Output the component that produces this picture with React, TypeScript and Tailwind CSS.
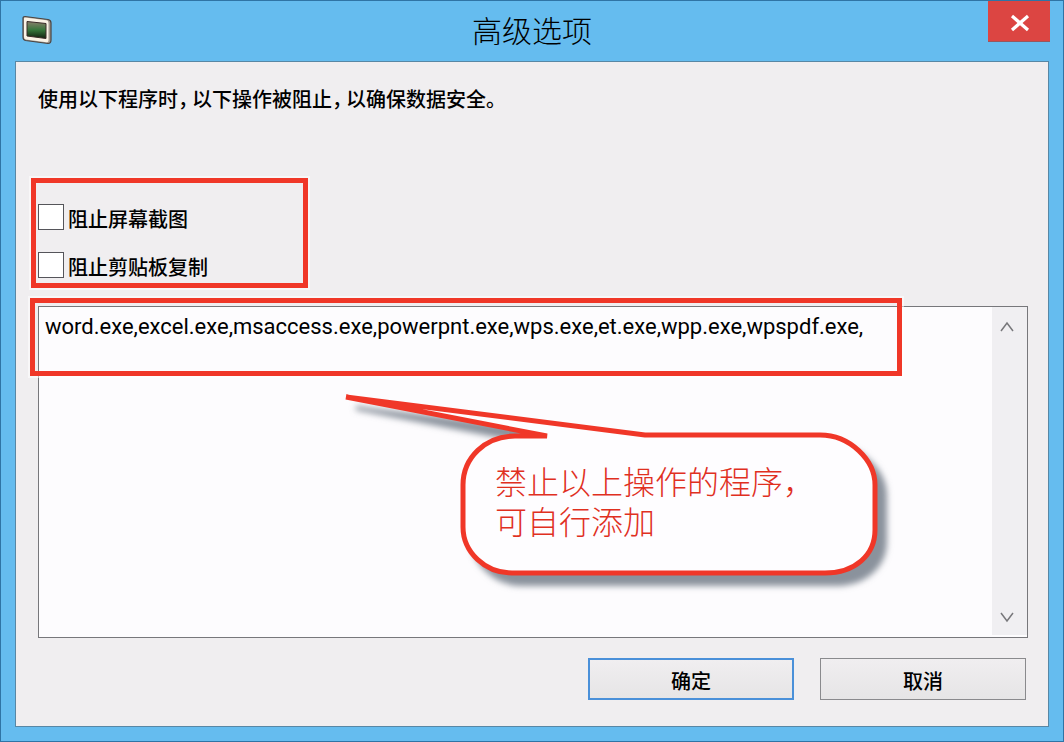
import { useState } from 'react';

const DEFAULT_PROGRAMS =
  'word.exe,excel.exe,msaccess.exe,powerpnt.exe,wps.exe,et.exe,wpp.exe,wpspdf.exe,';

const OPTIONS = [
  { id: 'block-screenshot', label: '阻止屏幕截图' },
  { id: 'block-clipboard', label: '阻止剪贴板复制' },
];

function MonitorIcon() {
  return (
    <svg className="h-8 w-8" viewBox="0 0 32 32" aria-hidden="true">
      <defs>
        <linearGradient id="screen" x1="0" y1="0" x2="0" y2="1">
          <stop offset="0" stopColor="#8a7f6c" />
          <stop offset="0.5" stopColor="#35763a" />
          <stop offset="1" stopColor="#10200f" />
        </linearGradient>
      </defs>
      <path d="M4 1.500 L27 4.500 Q30 5 30 8 V25 Q30 28.500 27 28.500 L4.500 25.500 Q2 25 2 22 V3.500 Q2 1.500 4 1.500Z" fill="#a39a90" stroke="#4b4440" strokeWidth="1.200" />
      <path d="M4 2.500 L25.500 5.200 Q27.500 5.500 27.500 8 V25.500 Q27.500 27.500 25.500 27.200 L5 24.500 Q3 24 3 22 V3.500 Q3 2.500 4 2.500Z" fill="#faf3e6" />
      <path d="M6 6.500 L25 8.500 V23.500 L6 21Z" fill="url(#screen)" stroke="#3a2c28" strokeWidth="1" />
    </svg>
  );
}

function TitleBar() {
  return (
    <header className="relative flex h-[60px] shrink-0 items-center justify-center pb-1">
      <div className="absolute left-5 top-3.5">
        <MonitorIcon />
      </div>
      <h1 className="text-[30px] font-light leading-10">高级选项</h1>
      <button
        type="button"
        aria-label="关闭"
        className="absolute right-[13px] top-0 flex h-[41px] w-[62px] items-center justify-center border-b border-[#98575f] bg-[#dc4542] pl-0.5 pt-1"
      >
        <svg className="h-5 w-5" viewBox="0 0 20 20" aria-hidden="true">
          <path d="M2 3 L18 17 M18 3 L2 17" stroke="#fff" strokeWidth="3.200" />
        </svg>
      </button>
    </header>
  );
}

// Full-width comma set on a narrower advance
function Comma() {
  return <span className="inline-block w-3.5 [font-feature-settings:'halt']">，</span>;
}

function ScrollButton({ label, d }: { label: string; d: string }) {
  return (
    <button type="button" aria-label={label} className="flex h-9 w-[30px] items-center justify-center">
      <svg className="h-3 w-4" viewBox="0 0 16 12" fill="none" aria-hidden="true">
        <path d={d} stroke="#77777b" strokeWidth="1.500" />
      </svg>
    </button>
  );
}

function Callout() {
  return (
    <div className="absolute left-[301px] top-[83px] h-[210px] w-[560px]">
      <svg className="absolute inset-0 h-full w-full overflow-visible" viewBox="0 0 560 210" aria-hidden="true">
        <defs>
          <filter id="soft" x="-10%" y="-20%" width="120%" height="140%">
            <feGaussianBlur stdDeviation="3" />
          </filter>
          <path
            id="bubble"
            d="M6 7 L305 45 H480 C510 45 535 70 535 95 V140 C535 165 515 183 485 183 H172 C145 183 123 162 123 137 V95 C123 68 145 46 175 46 H207 Z"
          />
        </defs>
        <use href="#bubble" x="10" y="11" fill="#8a929c" stroke="#8a929c" strokeWidth="4" filter="url(#soft)" />
        <use href="#bubble" fill="#fefdff" stroke="#f03728" strokeWidth="5" strokeLinejoin="bevel" />
      </svg>
      <p className="relative pl-[155px] pt-[70px] text-[32px] font-light leading-10 text-[#e0301f]">
        禁止以上操作的程序，
        <br />
        可自行添加
      </p>
    </div>
  );
}

export default function App() {
  const [checked, setChecked] = useState<Record<string, boolean>>({});
  const [programs, setPrograms] = useState(DEFAULT_PROGRAMS);

  return (
    <div
      lang="zh-CN"
      className="flex min-h-screen flex-col border border-[#2f74a5] bg-[#65bcef] font-['Noto_Sans_CJK_SC',sans-serif] text-black"
    >
      <TitleBar />

      <main className="mx-3.5 mb-3.5 flex flex-1 flex-col border border-[#5887a5] bg-[#f0eef0] pb-[26px] pt-[23px]">
        <p className="px-[22px] text-xl font-medium leading-7">
          使用以下程序时<Comma />
          以下操作被阻止<Comma />
          以确保数据安全。
        </p>

        {/* Options */}
        <div
          role="group"
          aria-label="阻止的操作"
          className="ml-[15px] mt-[65px] flex w-[277px] flex-col gap-[22px] border-[5px] border-[#f03728] pb-[5px] pl-[2px] pt-[21px] ring-2 ring-white/50"
        >
          {OPTIONS.map(option => (
            <div key={option.id} className="flex h-[26px] items-center gap-1">
              <input
                id={option.id}
                type="checkbox"
                checked={!!checked[option.id]}
                onChange={e => setChecked(prev => ({ ...prev, [option.id]: e.target.checked }))}
                className="h-[26px] w-[26px] appearance-none border border-[#55555a] bg-white checked:bg-[#3c8edb]"
              />
              <label htmlFor={option.id} className="pt-1 text-xl font-medium leading-7">
                {option.label}
              </label>
            </div>
          ))}
        </div>

        {/* Program list */}
        <div className="relative ml-[22px] mr-[20px] mt-[18px] flex min-h-80 flex-1 border border-[#77777b] bg-[#fdfcfe]">
          <textarea
            aria-label="程序列表"
            value={programs}
            onChange={e => setPrograms(e.target.value)}
            className="min-w-0 flex-1 resize-none overflow-hidden bg-transparent px-1.5 py-1.5 font-['Roboto',sans-serif] text-[22px] leading-7 outline-none"
          />
          <div className="mb-0.5 flex w-[35px] flex-col justify-between bg-[#f0eff2] pt-0.5">
            <ScrollButton label="向上滚动" d="M2 10 L8 2 L14 10" />
            <ScrollButton label="向下滚动" d="M2 2 L8 10 L14 2" />
          </div>
          <div className="pointer-events-none absolute -left-[9px] -top-[9px] right-[125px] h-[78px] border-[5px] border-[#f03728] ring-2 ring-white/50" />
          <Callout />
        </div>

        <div className="mr-[22px] mt-5 flex justify-end gap-[26px]">
          <button
            type="button"
            className="h-[42px] w-[206px] border-2 border-[#4a90d9] bg-linear-to-b from-[#f0eef0] to-[#e6e5e6] pt-1 text-xl font-medium leading-7"
          >
            确定
          </button>
          <button
            type="button"
            className="h-[42px] w-[206px] border border-[#8a8a8d] bg-linear-to-b from-[#f0eef0] to-[#e6e5e6] pt-1 text-xl font-medium leading-7"
          >
            取消
          </button>
        </div>
      </main>
    </div>
  );
}
